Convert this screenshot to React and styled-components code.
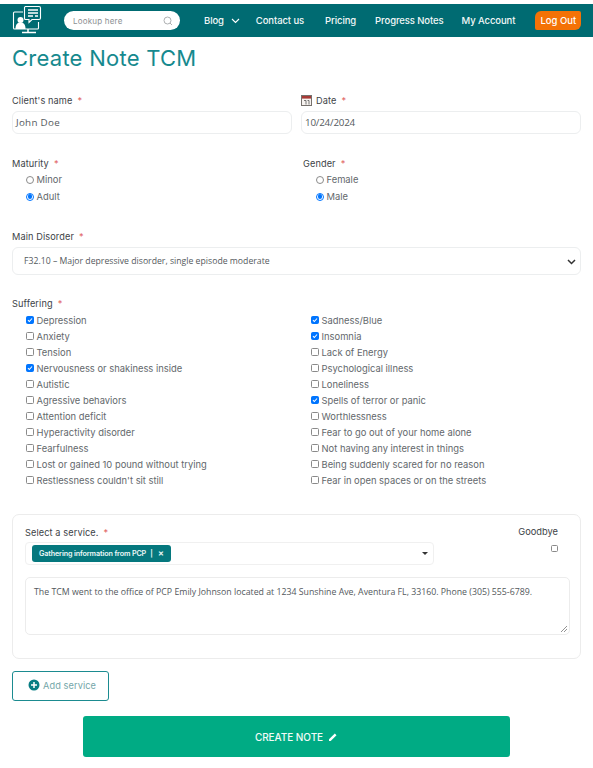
import React from "react";
import styled, { createGlobalStyle } from "styled-components";

const Global = createGlobalStyle`
  html, body { margin: 0; padding: 0; background: #fff; }
  body { font-family: "Inter", "Liberation Sans", sans-serif; color: #3d4145; }
  * { box-sizing: border-box; }
`;
const Page = styled.div`width: 593px; height: 768px; overflow: hidden; padding-top: 4px;`;
const Nav = styled.nav`
  height: 33px; background: #006b72; display: flex; align-items: center; padding-left: 12px;
`;
const Search = styled.div`
  width: 116px; height: 19px; margin-left: 22px; border-radius: 10px; background: #fff;
  display: flex; align-items: center; justify-content: space-between; padding: 0 7px 0 9px;
  font-size: 8px; letter-spacing: .2px; color: #8b8f92;
`;
const Links = styled.div`display: flex; align-items: center; margin-left: 24px; `;
const NavLink = styled.a`
  color: #f1f7f7; font-size: 9.5px; font-weight: 500; white-space: nowrap; margin-right: ${p => p.$gap}px;
  display: flex; align-items: center; gap: 7px; letter-spacing: -.1px;
`;
const LogOut = styled.a`
  width: 46px; height: 19px; background: #f47206; color: #fff; font-size: 9.5px; font-weight: 500;
  display: flex; align-items: center; justify-content: center; border-radius: 6px 2px 6px 2px;
`;
const Main = styled.main`padding: 0 12px;`;
const Title = styled.h1`
  margin: 0; height: 42px; padding-top: 7px; font-size: 22px; line-height: 29px; font-weight: 400; color: #16898e; letter-spacing: .25px;
`;
const Row = styled.div`display: grid; grid-template-columns: 280px 280px; column-gap: 9px; margin-top: ${p => p.$top}px;`;
const Label = styled.label`
  display: flex; align-items: center; height: 14px; font-size: 9.2px; color: #3d4347; letter-spacing: .1px; gap: ${p => p.$gap || 0}px;
  padding-left: ${p => p.$indent || 0}px;
`;
const Star = styled.span`color: #e05a5a; margin-left: 5px;`;
const TextField = styled.div`
  height: 23px; margin-top: 4px; border: 1px solid #eceeef; border-radius: 6px; display: flex; align-items: center;
  padding-left: 3px; font-family: "Open Sans", sans-serif; font-size: 9.8px; color: #555a5e; letter-spacing: ${p => p.$spread}px;
`;
const Options = styled.div`display: flex; flex-direction: column; padding-left: ${p => p.$indent}px; margin-top: ${p => p.$top || 0}px;`;
const Option = styled.label`
  display: flex; align-items: center; height: ${p => p.$h}px; font-size: 9.4px; color: #63686c; gap: 2.5px; white-space: nowrap;
`;
const Radio = styled.span`
  width: 8px; height: 8px; border-radius: 50%; flex: none; border: 1px solid ${p => p.$on ? "#0075ff" : "#8a8a8a"}; background: #fff;
  display: flex; align-items: center; justify-content: center;
  &::after { content: ""; width: 4.5px; height: 4.5px; border-radius: 50%; background: ${p => p.$on ? "#0075ff" : "transparent"}; }
`;
const Box = styled.span`
  width: 8px; height: 8px; border-radius: 1.5px; flex: none; border: 1px solid ${p => p.$on ? "#0075ff" : "#8a8a8a"}; background: ${p => p.$on ? "#0075ff" : "#fff"};
  display: flex; align-items: center; justify-content: center;
`;
const DisorderBlock = styled.div`margin-top: 24px;`;
const SufferingBlock = styled.div`margin-top: 21px;`;
const DisorderSelect = styled.div`
  height: 28px; margin-top: 4px; border: 1px solid #eceeef; border-radius: 6px; display: flex; align-items: center; justify-content: space-between;
  padding: 0 3px 0 11px; font-family: "Open Sans", sans-serif; font-size: 8.7px; color: #54595d;
`;
const Checks = styled.div`display: grid; grid-template-columns: 285px 1fr; margin-top: 2px; padding-left: 14px;`;
const Card = styled.section`
  margin-top: 26px; height: 145px; width: 569px; border: 1px solid #ececec; border-radius: 7px; padding: 10px 11px 0 12px;
`;
const CardTop = styled.div`display: grid; grid-template-columns: 409px 1fr;`;
const ServiceSelect = styled.div`
  margin-top: 3px; height: 23px; border: 1px solid #f0f0f0; border-radius: 4px; display: flex; align-items: center; justify-content: space-between; padding: 0 5px 0 6px;
`;
const Tag = styled.span`
  height: 17px; background: #05787e; color: #eef8f8; border-radius: 3px; font-size: 7.2px; font-weight: 600; padding: 0 7px;
  display: flex; align-items: center; letter-spacing: -.12px; gap: 4px; white-space: nowrap;
`;
const Caret = styled.span`width: 0; height: 0; border: 3px solid transparent; border-top: 3px solid #333; border-bottom: 0;`;
const Goodbye = styled.div`
  display: flex; flex-direction: column; align-items: flex-end; padding-right: 11px; font-size: 9.3px; color: #3d4347; line-height: 14px; white-space: nowrap;
`;
const GoodbyeBox = styled(Box)`margin-top: 6px; width: 7px; height: 7px;`;
const Notes = styled.div`
  position: relative; margin-top: 12px; height: 58px; width: 545px; border: 1px solid #ececec; border-radius: 5px; padding: 8px 8px;
  font-family: "Open Sans", sans-serif; font-size: 8.78px; line-height: 12px; color: #53585c; white-space: nowrap;
`;
const Grip = styled.svg`position: absolute; right: 1px; bottom: 1px;`;
const AddButton = styled.button`
  display: flex; align-items: center; gap: 3px; margin-top: 12px; width: 97px; height: 30px; padding: 0 0 2px 15px; background: #fff;
  border: 1px solid #1b8b90; border-radius: 3px; font-family: inherit; font-size: 9.2px; color: #74a6a9; letter-spacing: .1px;
`;
const SubmitRow = styled.div`display: flex; margin-top: 15px; padding-left: 71px;`;
const Submit = styled.button`
  width: 427px; height: 41px; border: 0; border-radius: 3px; background: #00ab84; color: #f2fbf8; font-family: inherit; font-size: 10px; font-weight: 500;
  display: flex; align-items: center; justify-content: center; gap: 5px; letter-spacing: -.05px;
`;
const CalIcon = () => (
  <svg width="11" height="11" viewBox="0 0 11 11"><rect x=".5" y=".5" width="10" height="10" fill="#f7f3f0" stroke="#76716d" /><rect x="1" y="1" width="9" height="2.6" fill="#a73a36" /><path d="M3 5.5h2v4M6.5 5.5h1.5v4" stroke="#555" strokeWidth=".8" fill="none" /></svg>
);
const Tick = () => (
  <svg width="8" height="8" viewBox="0 0 8 8"><path d="M1.3 4.2l1.8 1.8 3.6-4" stroke="#fff" strokeWidth="1.4" fill="none" /></svg>
);
const LogoSvg = styled.svg`margin-top: -3px; flex: none;`;
const Logo = () => (
  <LogoSvg width="30" height="29" viewBox="0 0 30 29" fill="none" stroke="#fff" strokeWidth="1.1">
    <path d="M11 7H2.5A1 1 0 0 0 1.500 8v15a1 1 0 0 0 1 1h23a1 1 0 0 0 1-1V17" />
    <path d="M13 1.500h14a1.500 1.500 0 0 1 1.500 1.500v10a1.500 1.500 0 0 1-1.500 1.500H20l-3 3v-3h-3.500a1 1 0 0 1-1-1V2.500a1 1 0 0 1 1-1z" />
    <path d="M16 5h10M16 8h10M16 11h5M23 11h3" strokeWidth="1.300" />
    <circle cx="8.500" cy="15" r="3" fill="#fff" stroke="none" />
    <path d="M3.500 24c0-5 2-6.500 5-6.500s5 1.500 5 6.500z" fill="#fff" stroke="none" />
    <path d="M16 24v3M10 27.500h14" strokeWidth="1.500" />
  </LogoSvg>
);
const leftChecks = [["Depression",1],["Anxiety"],["Tension"],["Nervousness or shakiness inside",1],["Autistic"],["Agressive behaviors"],["Attention deficit"],["Hyperactivity disorder"],["Fearfulness"],["Lost or gained 10 pound without trying"],["Restlessness couldn't sit still"]];
const rightChecks = [["Sadness/Blue",1],["Insomnia",1],["Lack of Energy"],["Psychological illness"],["Loneliness"],["Spells of terror or panic",1],["Worthlessness"],["Fear to go out of your home alone"],["Not having any interest in things"],["Being suddenly scared for no reason"],["Fear in open spaces or on the streets"]];
const CheckColumn = ({ items }) => (
  <Options $indent={0}>
    {items.map(([t, on]) => (
      <Option key={t} $h={16}><Box $on={on}>{on && <Tick />}</Box>{t}</Option>
    ))}
  </Options>
);
export default function App() {
  return (
    <Page>
      <Global />
      <Nav>
        <Logo />
        <Search>Lookup here
          <svg width="10" height="10" viewBox="0 0 10 10" fill="none" stroke="#9a9da0" strokeWidth=".8"><circle cx="4.500" cy="4.500" r="3.500" /><path d="M7 7l2 2" /></svg>
        </Search>
        <Links>
          <NavLink $gap={16}>Blog
            <svg width="9" height="6" viewBox="0 0 9 6" fill="none" stroke="#fff" strokeWidth="1.100"><path d="M1 1l3.500 3.500L8 1" /></svg>
          </NavLink>
          <NavLink $gap={21}>Contact us</NavLink>
          <NavLink $gap={19}>Pricing</NavLink>
          <NavLink $gap={18}>Progress Notes</NavLink>
          <NavLink $gap={20}>My Account</NavLink>
          <LogOut>Log Out</LogOut>
        </Links>
      </Nav>
      <Main>
        <Title>Create Note TCM</Title>
        <Row $top={14}>
          <div><Label>Client's name<Star>*</Star></Label><TextField $spread={0.3}>John Doe</TextField></div>
          <div><Label $gap={4}><CalIcon /><span>Date<Star>*</Star></span></Label><TextField $spread={-0.2}>10/24/2024</TextField></div>
        </Row>
        <Row $top={22}>
          <div>
            <Label>Maturity<Star>*</Star></Label>
            <Options $indent={14} $top={1}>
              <Option $h={17}><Radio />Minor</Option>
              <Option $h={17}><Radio $on />Adult</Option>
            </Options>
          </div>
          <div>
            <Label $indent={2}>Gender<Star>*</Star></Label>
            <Options $indent={15} $top={1}>
              <Option $h={17}><Radio />Female</Option>
              <Option $h={17}><Radio $on />Male</Option>
            </Options>
          </div>
        </Row>
        <DisorderBlock>
          <Label>Main Disorder<Star>*</Star></Label>
          <DisorderSelect>
            F32.10 – Major depressive disorder, single episode moderate
            <svg width="11" height="11" viewBox="0 0 11 11" fill="none" stroke="#333" strokeWidth="1.500"><path d="M2 4l3.500 3.500L9 4" /></svg>
          </DisorderSelect>
        </DisorderBlock>
        <SufferingBlock>
          <Label>Suffering<Star>*</Star></Label>
          <Checks>
            <CheckColumn items={leftChecks} />
            <CheckColumn items={rightChecks} />
          </Checks>
        </SufferingBlock>
        <Card>
          <CardTop>
            <div>
              <Label>Select a service.<Star>*</Star></Label>
              <ServiceSelect>
                <Tag>Gathering information from PCP<span>|</span><span>&nbsp;✕</span></Tag>
                <Caret />
              </ServiceSelect>
            </div>
            <Goodbye>Goodbye<GoodbyeBox /></Goodbye>
          </CardTop>
          <Notes>
            The TCM went to the office of PCP Emily Johnson located at 1234 Sunshine Ave, Aventura FL, 33160. Phone (305) 555-6789.
            <Grip width="8" height="8" viewBox="0 0 8 8" stroke="#777" strokeWidth=".8"><path d="M1 7l6-6M4 7l3-3" /></Grip>
          </Notes>
        </Card>
        <AddButton>
          <svg width="12" height="12" viewBox="0 0 12 12"><circle cx="6" cy="6" r="5.500" fill="#087d83" /><path d="M6 3v6M3 6h6" stroke="#fff" strokeWidth="1.500" /></svg>
          Add service
        </AddButton>
        <SubmitRow>
          <Submit>CREATE NOTE
            <svg width="10" height="10" viewBox="0 0 10 10" fill="#fff"><path d="M1 7.300L6.800 1.500l1.700 1.700L2.700 9H1z" /></svg>
          </Submit>
        </SubmitRow>
      </Main>
    </Page>
  );
}
